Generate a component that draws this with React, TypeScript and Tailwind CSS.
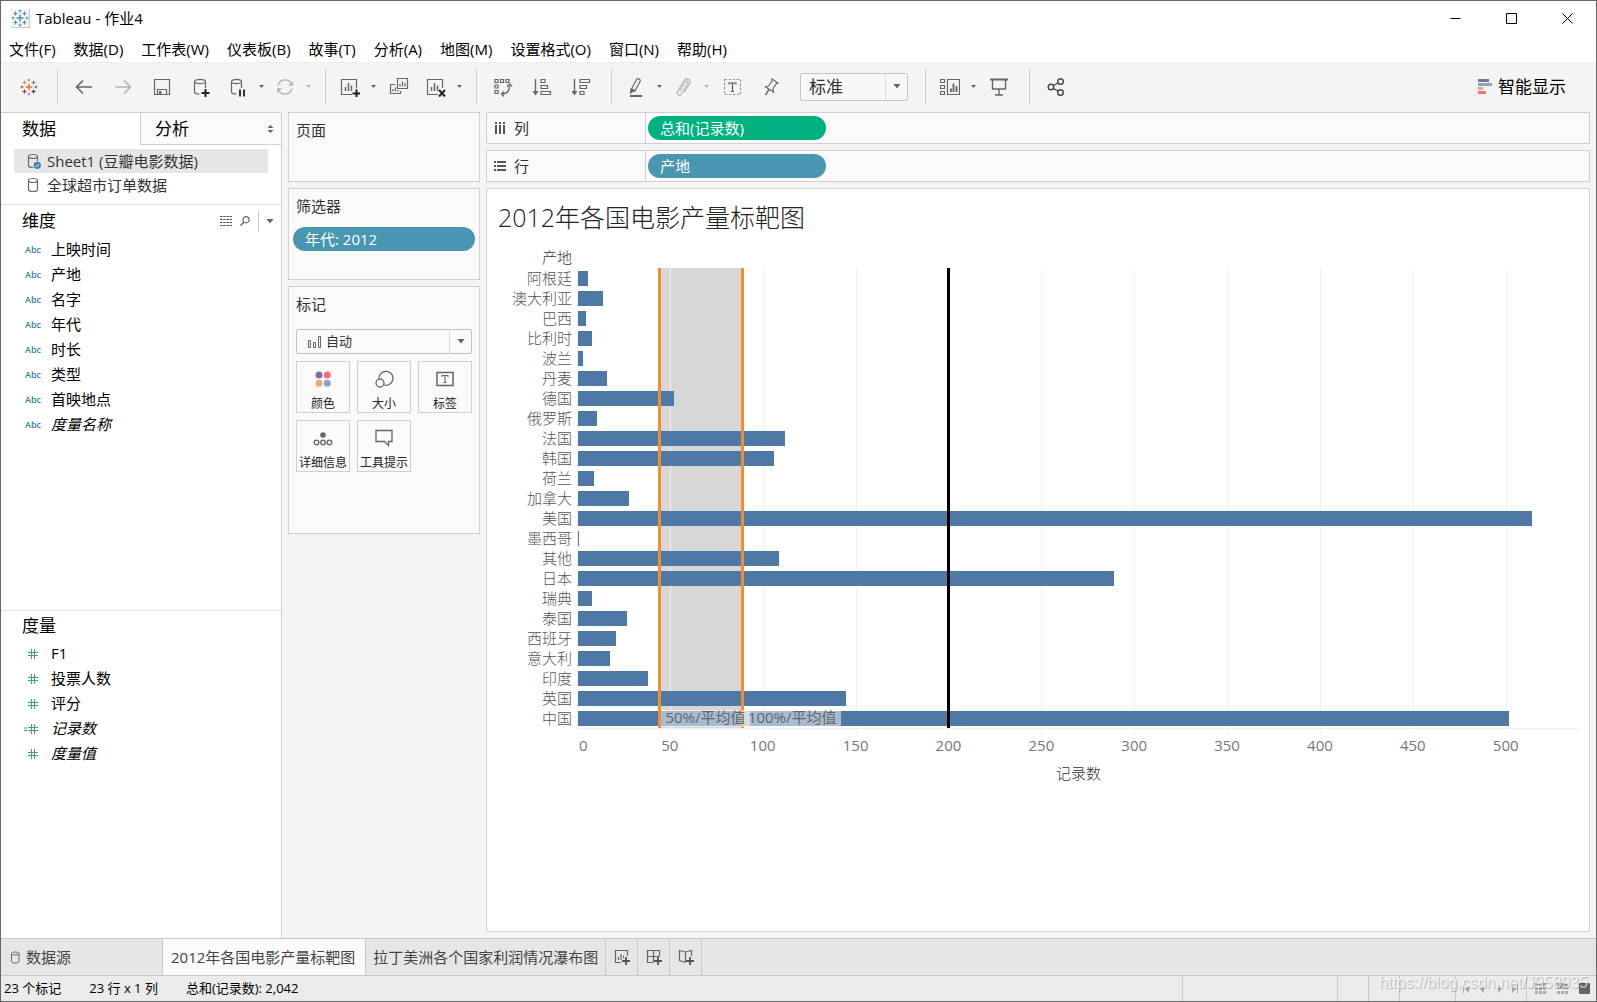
import React, { useState } from 'react';

interface Country {
    name: string;
    count: number;
}

const COUNTRIES: Country[] = [
    { name: '阿根廷', count: 6 },
    { name: '澳大利亚', count: 14 },
    { name: '巴西', count: 5 },
    { name: '比利时', count: 8 },
    { name: '波兰', count: 3 },
    { name: '丹麦', count: 16 },
    { name: '德国', count: 52 },
    { name: '俄罗斯', count: 11 },
    { name: '法国', count: 112 },
    { name: '韩国', count: 106 },
    { name: '荷兰', count: 9 },
    { name: '加拿大', count: 28 },
    { name: '美国', count: 514 },
    { name: '墨西哥', count: 1 },
    { name: '其他', count: 109 },
    { name: '日本', count: 289 },
    { name: '瑞典', count: 8 },
    { name: '泰国', count: 27 },
    { name: '西班牙', count: 21 },
    { name: '意大利', count: 18 },
    { name: '印度', count: 38 },
    { name: '英国', count: 145 },
    { name: '中国', count: 502 }
];

const AXIS_MAX = 540;
const TICKS = [0, 50, 100, 150, 200, 250, 300, 350, 400, 450, 500];
const TOTAL = COUNTRIES.reduce((sum, c) => sum + c.count, 0);
const AVERAGE = TOTAL / COUNTRIES.length;
const TARGET = 200;

const pct = (value: number) => `${(value / AXIS_MAX) * 100}%`;

const MENUS = ['文件(F)', '数据(D)', '工作表(W)', '仪表板(B)', '故事(T)', '分析(A)', '地图(M)', '设置格式(O)', '窗口(N)', '帮助(H)'];

const DIMENSIONS = ['上映时间', '产地', '名字', '年代', '时长', '类型', '首映地点', '度量名称'];
const MEASURES = ['F1', '投票人数', '评分', '记录数', '度量值'];

/* ---------- icons ---------- */

interface IconProps {
    size?: number;
    children: React.ReactNode;
    className?: string;
}

const Icon: React.FC<IconProps> = ({ size = 20, children, className = '' }) => (
    <svg
        width={size}
        height={size}
        viewBox={`0 0 ${size} ${size}`}
        fill="none"
        stroke="#666"
        strokeWidth="1.2"
        className={`shrink-0 ${className}`}
        aria-hidden="true"
    >
        {children}
    </svg>
);

const TableauLogo: React.FC<{ mono?: boolean }> = ({ mono }) => {
    const c = (color: string) => (mono ? '#4a90b8' : color);
    return (
        <Icon size={18}>
            <path d="M9 5.5v7M5.5 9h7" stroke={c('#e8762c')} strokeWidth="1.5" />
            <path d="M4.5 2.5v4M2.5 4.5h4" stroke={c('#eb912c')} strokeWidth="1.2" />
            <path d="M13.5 2.5v4M11.5 4.5h4" stroke={c('#59879b')} strokeWidth="1.2" />
            <path d="M4.5 11.5v4M2.5 13.5h4" stroke={c('#c72035')} strokeWidth="1.2" />
            <path d="M13.5 11.5v4M11.5 13.5h4" stroke={c('#1f447e')} strokeWidth="1.2" />
            <path d="M9 0.5v3M7.5 2h3M9 14.5v3M7.5 16h3" stroke={c('#7199a6')} strokeWidth="1" />
            <path d="M2 7.5v3M0.5 9h3M16 7.5v3M14.5 9h3" stroke={c('#5b6591')} strokeWidth="1" />
        </Icon>
    );
};

const Cylinder: React.FC = () => (
    <Icon size={16}>
        <path d="M3.5 3.5v9c0 1 2 2 4.5 2s4.5-1 4.5-2v-9" />
        <ellipse cx="8" cy="3.5" rx="4.5" ry="2" />
    </Icon>
);

const CylinderChecked: React.FC = () => (
    <Icon size={16}>
        <path d="M3.5 3.5v9c0 1 2 2 4.5 2M12.5 8v-4.5" />
        <ellipse cx="8" cy="3.5" rx="4.5" ry="2" />
        <circle cx="12.3" cy="12.3" r="3.6" fill="#3a85a8" stroke="none" />
        <path d="M10.6 12.4l1.2 1.2 2.2-2.5" stroke="#fff" strokeWidth="1" />
    </Icon>
);

const Caret: React.FC = () => (
    <svg width="8" height="5" viewBox="0 0 8 5" className="shrink-0 fill-[#666]" aria-hidden="true">
        <path d="M0.5 0h7L4 4.5z" />
    </svg>
);

const SmallCaret: React.FC<{ muted?: boolean }> = ({ muted }) => (
    <svg width="5" height="3" viewBox="0 0 5 3" className={muted ? 'fill-[#b4b4b4]' : 'fill-[#666]'} aria-hidden="true">
        <path d="M0 0h5L2.5 3z" />
    </svg>
);

const BackIcon = () => (
    <Icon><path d="M18 10H3M9 3.5L2.5 10L9 16.5" strokeWidth="1.6" /></Icon>
);

const ForwardIcon = () => (
    <Icon><path d="M2 10h15M11 3.5l6.5 6.5l-6.5 6.5" stroke="#b4b4b4" strokeWidth="1.6" /></Icon>
);

const SaveIcon = () => (
    <Icon>
        <path d="M2.5 2.5h15v15h-15z" />
        <path d="M5.5 17.5v-5h9v5" />
        <path d="M7 14h2.5v3.5H7z" fill="#666" stroke="none" />
    </Icon>
);

const DbPlusIcon = () => (
    <Icon>
        <path d="M3.5 5v10c0 1 1.8 2 5 2M14.5 11V5" />
        <ellipse cx="9" cy="4.5" rx="5.5" ry="2.2" />
        <path d="M14.5 12v8M10.5 16h8" stroke="#222" strokeWidth="2" />
    </Icon>
);

const DbPauseIcon = () => (
    <Icon>
        <path d="M3.5 5v10c0 1 1.8 2 5 2M13.5 11V5" />
        <ellipse cx="8.5" cy="4.5" rx="5" ry="2.2" />
        <path d="M12 12.5v7M16 12.5v7" stroke="#333" strokeWidth="2" />
    </Icon>
);

const RefreshIcon = () => (
    <Icon>
        <path d="M3 8.5a7.2 7.2 0 0 1 13.5-1.500M17 11.5a7.2 7.2 0 0 1-13.5 1.500" stroke="#b4b4b4" strokeWidth="1.4" />
        <path d="M18 4v4.8h-4.800zM2 16v-4.800h4.800z" fill="#b4b4b4" stroke="none" />
    </Icon>
);

const NewSheetIcon = () => (
    <Icon>
        <path d="M12 17.5H1.5v-15h15v9" />
        <path d="M5.5 14V10M8.5 14V6M11.5 14V8.5" strokeWidth="1.5" />
        <path d="M16.5 12.5v8M12.5 16.5h8" stroke="#222" strokeWidth="2" />
    </Icon>
);

const DuplicateIcon = () => (
    <Icon>
        <path d="M8.5 1.5h10v10h-10z" />
        <path d="M6 7.5H1.5v9h10V14" />
        <path d="M11 9.5V7M13.5 9.5V4.5M16 9.5V6M4 14.5V12M6.5 14.5V10.5M9 14.5V13" />
    </Icon>
);

const ClearIcon = () => (
    <Icon>
        <path d="M12 17.5H1.5v-15h15v8.5" />
        <path d="M5.5 14V10M8.5 14V6M11.5 14V8.5" strokeWidth="1.5" />
        <path d="M13 13l6 6.5M19 13l-6 6.5" stroke="#222" strokeWidth="2" />
    </Icon>
);

const SwapIcon = () => (
    <Icon>
        <path d="M2 2.5h3v3H2zM7.5 2.5h3v3h-3zM13 2.5h3v3h-3zM2 8h3v3H2zM2 13.5h3v3H2z" />
        <path d="M16.5 9c0 5-2.5 7.5-7 8" strokeWidth="1.4" />
        <path d="M14 9.5L16.5 7L19 9.5M11 14.5L8.5 17l2.5 2.5" strokeWidth="1.4" />
    </Icon>
);

const SortAscIcon = () => (
    <Icon>
        <path d="M3.5 2v14" strokeWidth="1.4" />
        <path d="M0.5 14h6l-3 4.5z" fill="#666" stroke="none" />
        <path d="M9 2.5h4v3H9zM9 8.5h6.5v3H9zM9 14.5h9.5v3H9z" />
    </Icon>
);

const SortDescIcon = () => (
    <Icon>
        <path d="M3.5 2v14" strokeWidth="1.4" />
        <path d="M0.5 14h6l-3 4.5z" fill="#666" stroke="none" />
        <path d="M9 2.5h9.5v3H9zM9 8.5h6.5v3H9zM9 14.5h4v3H9z" />
    </Icon>
);

const PenIcon = () => (
    <Icon>
        <path d="M5.5 12L10.5 2.500q1-1.500 2.700-.500t.800 2.500L9 14z" />
        <path d="M5 11.500l4.500 2.500" />
        <path d="M4.500 16l.500-3.500 2.500 1.500z" fill="#666" />
        <path d="M4 19h12" strokeWidth="2" />
    </Icon>
);

const ClipIcon = () => (
    <Icon>
        <path
            d="M6.5 14.500L12 5c1-2 3.500-.500 2.500 1.500l-6 10.500c-1.500 2.500-5.500.500-4-2.500l6.500-11c2-3.500 7.500-.500 5.500 3L11.500 15"
            stroke="#b4b4b4"
        />
    </Icon>
);

const TextIcon = () => (
    <Icon>
        <path d="M2.5 2.5h16v15h-16z" stroke="#999" strokeDasharray="2.5 1.5" />
        <path d="M7 7.5V6h7v1.5M10.5 6v8.500M9 14.500h3" stroke="#555" strokeWidth="1.200" />
    </Icon>
);

const PinIcon = () => (
    <Icon>
        <path d="M11 2l6 4-1.500.500-3.500 5 .500 3.500-8-5 3-1 3.500-5z" />
        <path d="M8 12.500L4.500 18" strokeWidth="1.400" />
    </Icon>
);

const ShowCardsIcon = () => (
    <Icon>
        <path d="M0.5 2.5h4v3h-4zM0.5 8.5h4v3h-4zM0.5 14.5h4v3h-4zM7.5 2.5h12v15h-12z" />
        <path d="M11 15v-3.5M13.5 15V6.5M16.5 15v-6" strokeWidth="1.8" />
    </Icon>
);

const PresentIcon = () => (
    <Icon>
        <path d="M1 2.5h18" strokeWidth="2" />
        <path d="M3.5 3v9h13V3M10 12v6M6 18h8" strokeWidth="1.4" />
    </Icon>
);

const ShareIcon = () => (
    <Icon>
        <g strokeWidth="1.4" stroke="#444">
            <circle cx="5" cy="10" r="2.8" />
            <circle cx="14.5" cy="4.5" r="2.8" />
            <circle cx="14.5" cy="15.5" r="2.8" />
            <path d="M7.5 8.5l4.5-2.5M7.5 11.5l4.5 2.5" />
        </g>
    </Icon>
);

const HashIcon: React.FC<{ calculated?: boolean }> = ({ calculated }) => (
    <svg width="16" height="12" viewBox="0 0 16 12" fill="none" stroke="#3f9f7f" aria-hidden="true">
        <path d="M8.5 1v10M11.5 1v10M5 4.5h10M5 7.5h10" strokeWidth="1.1" />
        {calculated && <path d="M1 5h3M1 7.5h3" strokeWidth="1" />}
    </svg>
);

/* ---------- title bar, menu and toolbar ---------- */

const TitleBar: React.FC = () => (
    <div className="flex h-[34px] items-center justify-between bg-white pr-px pl-[10px]">
        <div className="flex items-center gap-1.5">
            <span className="border-r border-b border-[#c8c8c8] bg-[#f4f4f4]"><TableauLogo mono /></span>
            <span className="text-[15px] text-black">Tableau - 作业4</span>
        </div>
        <div className="flex">
            <button aria-label="最小化" className="flex h-8 w-14 items-center justify-center">
                <Icon size={11}><path d="M0.5 5.5h10" stroke="#000" strokeWidth="1" /></Icon>
            </button>
            <button aria-label="最大化" className="flex h-8 w-14 items-center justify-center">
                <Icon size={11}><path d="M0.5 0.5h10v10h-10z" stroke="#000" strokeWidth="1" /></Icon>
            </button>
            <button aria-label="关闭" className="flex h-8 w-14 items-center justify-center">
                <Icon size={11}><path d="M0.5 0.5l10 10M10.5 0.5l-10 10" stroke="#000" strokeWidth="1" /></Icon>
            </button>
        </div>
    </div>
);

const MenuBar: React.FC = () => (
    <nav className="flex h-[27px] items-center gap-[18px] bg-white pt-0.5 pl-2 text-[15px] text-black">
        {MENUS.map(menu => (
            <button key={menu} className="whitespace-nowrap">{menu}</button>
        ))}
    </nav>
);

interface ToolProps {
    label: string;
    children: React.ReactNode;
    menu?: boolean;
    muted?: boolean;
}

const Tool: React.FC<ToolProps> = ({ label, children, menu, muted }) => (
    <>
        <button aria-label={label} className={`flex h-9 items-center justify-center ${menu ? 'w-[35px]' : 'w-[39px]'}`}>
            {children}
        </button>
        {menu && (
            <button aria-label={`${label}选项`} className="flex h-9 w-3 items-center justify-center">
                <SmallCaret muted={muted} />
            </button>
        )}
    </>
);

const Divider = () => <span className="mr-1.5 ml-[11px] h-[35px] w-px bg-[#cfcfcf]" />;

const Toolbar: React.FC = () => {
    const [fit, setFit] = useState('标准');

    return (
        <div className="flex h-[50px] items-center border-t border-[#ededed] bg-[#f4f4f4] pb-0.5">
            <div className="flex w-[45px] justify-center pl-[11px]">
                <TableauLogo />
            </div>
            <Divider />
            <Tool label="撤消"><BackIcon /></Tool>
            <Tool label="恢复"><ForwardIcon /></Tool>
            <Tool label="保存"><SaveIcon /></Tool>
            <Tool label="新建数据源"><DbPlusIcon /></Tool>
            <Tool label="暂停自动更新" menu><DbPauseIcon /></Tool>
            <Tool label="运行更新" menu muted><RefreshIcon /></Tool>
            <Divider />
            <Tool label="新建工作表" menu><NewSheetIcon /></Tool>
            <Tool label="复制"><DuplicateIcon /></Tool>
            <Tool label="清除工作表" menu><ClearIcon /></Tool>
            <Divider />
            <Tool label="交换行和列"><SwapIcon /></Tool>
            <Tool label="升序排序"><SortAscIcon /></Tool>
            <Tool label="降序排序"><SortDescIcon /></Tool>
            <Divider />
            <Tool label="突出显示" menu><PenIcon /></Tool>
            <Tool label="组成员" menu muted><ClipIcon /></Tool>
            <Tool label="显示标记标签"><TextIcon /></Tool>
            <Tool label="固定轴"><PinIcon /></Tool>
            <div className="mr-1.5 ml-2.5 flex h-7 w-[108px] items-center rounded-xs border border-[#c4c4c4] bg-[#f7f7f7]">
                <select
                    aria-label="适合"
                    value={fit}
                    onChange={e => setFit(e.target.value)}
                    className="h-full min-w-0 flex-1 appearance-none pl-2 text-[17px] text-[#333] outline-none"
                >
                    <option>标准</option>
                    <option>整个视图</option>
                </select>
                <span className="pointer-events-none flex h-full w-[22px] items-center justify-center border-l border-[#dcdcdc]">
                    <Caret />
                </span>
            </div>
            <Divider />
            <Tool label="显示/隐藏卡" menu><ShowCardsIcon /></Tool>
            <Tool label="演示模式"><PresentIcon /></Tool>
            <Divider />
            <Tool label="共享"><ShareIcon /></Tool>
            <button className="mr-[30px] ml-auto flex items-center gap-1.5 text-[17px] text-black">
                <svg width="14" height="16" viewBox="0 0 14 16" aria-hidden="true">
                    <path d="M0 0h11v3H0z" fill="#856f9b" />
                    <path d="M0 4h14v3H0z" fill="#85a7cf" />
                    <path d="M0 8h5v3H0z" fill="#f5a57c" />
                    <path d="M0 12h8v3H0z" fill="#f96f80" />
                </svg>
                智能显示
            </button>
        </div>
    );
};

/* ---------- data pane ---------- */

const DataPane: React.FC = () => (
    <aside className="flex w-[281px] shrink-0 flex-col border-t border-r border-[#d0d0d0] bg-white text-[15px] text-black">
        <div className="flex h-8 text-[17px]">
            <button className="w-[139px] pl-[21px] text-left">数据</button>
            <button className="flex flex-1 items-center justify-between border-b border-l border-[#d0d0d0] bg-[#fafafa] pr-[7px] pl-3.5">
                分析
                <svg width="7" height="8" viewBox="0 0 7 8" className="fill-[#56657a]" aria-hidden="true">
                    <path d="M0.5 3L3.5 0l3 3zM0.5 5h6l-3 3z" />
                </svg>
            </button>
        </div>
        <ul className="flex h-[59px] flex-col pt-1 pr-[13px] pl-[13px] text-[#333]">
            <li className="flex h-6 items-center gap-1.5 bg-[#e6e6e6] pl-[11px]">
                <CylinderChecked />
                Sheet1 (豆瓣电影数据)
            </li>
            <li className="flex h-6 items-center gap-1.5 pl-[11px]">
                <Cylinder />
                全球超市订单数据
            </li>
        </ul>
        <section className="flex-1 border-t border-[#e0e0e0]">
            <div className="flex h-8 items-center pr-[7px] pl-[21px]">
                <h2 className="flex-1 text-[17px]">维度</h2>
                <button aria-label="查看数据">
                    <svg width="12" height="10" viewBox="0 0 12 10" stroke="#555" aria-hidden="true">
                        <path d="M0 0.5h12M0 3.5h12M0 6.5h12M0 9.5h12" strokeWidth="1" strokeDasharray="2.5 .7" />
                    </svg>
                </button>
                <button aria-label="查找字段" className="ml-2">
                    <Icon size={10}>
                        <circle cx="6" cy="3.7" r="3.1" />
                        <path d="M4 6L0.5 9.5" strokeWidth="1.5" />
                    </Icon>
                </button>
                <span className="mr-[7px] ml-2 h-[22px] w-px bg-[#cfcfcf]" />
                <button aria-label="维度选项"><Caret /></button>
            </div>
            <ul>
                {DIMENSIONS.map(field => (
                    <li key={field} className="flex h-[25px] items-center pl-6">
                        <span className="w-[26px] text-[9px] font-semibold text-[#3a7f9c]">Abc</span>
                        <span className={field === '度量名称' ? 'italic' : ''}>{field}</span>
                    </li>
                ))}
            </ul>
        </section>
        <section className="h-82 border-t border-[#e0e0e0]">
            <h2 className="flex h-[30px] items-center pl-[21px] text-[17px]">度量</h2>
            <ul>
                {MEASURES.map(field => (
                    <li key={field} className="flex h-[25px] items-center pl-[22px]">
                        <span className="w-[28px]"><HashIcon calculated={field === '记录数'} /></span>
                        <span className={field === '记录数' || field === '度量值' ? 'italic' : ''}>{field}</span>
                    </li>
                ))}
            </ul>
        </section>
    </aside>
);

/* ---------- cards ---------- */

interface CardProps {
    title: string;
    className: string;
    children?: React.ReactNode;
}

const Card: React.FC<CardProps> = ({ title, className, children }) => (
    <section className={`border border-[#d0d0d0] bg-[#fafafa] ${className}`}>
        <h2 className="flex h-[34px] items-center px-[7px] text-[15px] text-[#333]">{title}</h2>
        {children}
    </section>
);

const MarkTile: React.FC<{ label: string; children: React.ReactNode }> = ({ label, children }) => (
    <button className="flex h-[52px] flex-col items-center justify-between border border-[#d0d0d0] pt-2 text-xs whitespace-nowrap text-[#222]">
        <svg width="20" height="18" viewBox="0 0 20 18" fill="none" stroke="#666" strokeWidth="1.3" aria-hidden="true">
            {children}
        </svg>
        <span className="leading-4">{label}</span>
    </button>
);

const Cards: React.FC = () => {
    const [mark, setMark] = useState('自动');

    return (
        <div className="flex w-[192px] shrink-0 flex-col gap-1.5">
            <Card title="页面" className="h-[70px]" />
            <Card title="筛选器" className="h-[92px]">
                <button className="mx-1 mt-1 flex h-6 w-[182px] items-center rounded-full bg-[#4996b2] pl-3 text-[15px] text-white">
                    年代: 2012
                </button>
            </Card>
            <Card title="标记" className="h-[248px]">
                <div className="mx-[7px] mt-2 mb-[7px] flex h-[25px] items-center rounded-xs border border-[#c4c4c4] pl-[11px]">
                    <svg width="14" height="14" viewBox="0 0 14 14" fill="none" stroke="#666" aria-hidden="true">
                        <path d="M0.5 5.5h2v7h-2zM5.5 7.5h2v5h-2zM10.5 1.5h2v11h-2z" />
                    </svg>
                    <select
                        aria-label="标记类型"
                        value={mark}
                        onChange={e => setMark(e.target.value)}
                        className="h-full min-w-0 flex-1 appearance-none pl-1 text-[13px] text-[#333] outline-none"
                    >
                        <option>自动</option>
                        <option>条形图</option>
                        <option>线</option>
                    </select>
                    <span className="pointer-events-none flex h-full w-[22px] items-center justify-center border-l border-[#dcdcdc]">
                        <Caret />
                    </span>
                </div>
                <div className="mx-[7px] grid grid-cols-3 gap-[7px]">
                    <MarkTile label="颜色">
                        <g stroke="none">
                            <circle cx="6" cy="5" r="3.5" fill="#856f9b" />
                            <circle cx="14.3" cy="5" r="3.5" fill="#f96f80" />
                            <circle cx="6" cy="13.3" r="3.5" fill="#f5a57c" />
                            <circle cx="14.3" cy="13.3" r="3.5" fill="#85a7cf" />
                        </g>
                    </MarkTile>
                    <MarkTile label="大小">
                        <path d="M5 8a7 7 0 1 1 5 7" />
                        <circle cx="6" cy="13" r="4" />
                    </MarkTile>
                    <MarkTile label="标签">
                        <path d="M2 2.5h16v13H2z" strokeWidth="1.5" />
                        <path d="M7 7V5.5h6V7M10 5.5v7M8.5 12.5h3" strokeWidth="1.1" />
                    </MarkTile>
                    <MarkTile label="详细信息">
                        <circle cx="10" cy="6" r="2.8" fill="#666" stroke="none" />
                        <circle cx="3.5" cy="13.5" r="2.3" />
                        <circle cx="10" cy="13.5" r="2.3" />
                        <circle cx="16.5" cy="13.5" r="2.3" />
                    </MarkTile>
                    <MarkTile label="工具提示">
                        <path d="M2 1.5h16v11h-3.5v4l-4-4H2z" />
                    </MarkTile>
                </div>
            </Card>
        </div>
    );
};

/* ---------- shelves and view ---------- */

interface ShelfProps {
    label: string;
    icon: React.ReactNode;
    children: React.ReactNode;
}

const Shelf: React.FC<ShelfProps> = ({ label, icon, children }) => (
    <div className="flex h-8 border border-[#d0d0d0] bg-[#fafafa]">
        <div className="flex w-[159px] items-center gap-2 border-r border-[#d0d0d0] pl-[7px] text-[15px] text-[#333]">
            {icon}
            {label}
        </div>
        <div className="flex flex-1 items-center pl-0.5">{children}</div>
    </div>
);

const BandLabel: React.FC<{ at: number; children: React.ReactNode }> = ({ at, children }) => (
    <span
        className="absolute bottom-px ml-0.5 h-[17px] bg-white/50 px-1 text-[15px] leading-[14px] font-normal whitespace-nowrap text-[#666]"
        style={{ left: pct(at) }}
    >
        {children}
    </span>
);

const BarChart: React.FC = () => (
    <div className="flex pr-[9px] pl-3 font-light">
        <div className="w-[78px] shrink-0 pr-[5px] text-right text-[15px] text-[#555]">
            <div className="h-5 leading-[18px] text-[#333]">产地</div>
            {COUNTRIES.map(c => (
                <div key={c.name} className="h-5 leading-5 whitespace-nowrap">{c.name}</div>
            ))}
        </div>
        <div className="flex-1 pt-5">
            <div className="relative border-b border-[#f0f0f0]">
                {/* shaded band between half of the average and the average */}
                <div
                    className="absolute inset-y-0 bg-[#d7d7d7]"
                    style={{ left: pct(AVERAGE / 2), width: pct(AVERAGE / 2) }}
                />
                {TICKS.map(t => (
                    <div key={t} className="absolute top-0 -bottom-1.5 w-px bg-[#f0f0f0]" style={{ left: pct(t) }} />
                ))}
                {COUNTRIES.map(c => (
                    <div key={c.name} className="relative h-5 pt-[3px]">
                        <div className="h-[15px] border-l border-[#f0f0f0] bg-[#4e79a7]" style={{ width: pct(c.count) }} />
                    </div>
                ))}
                <div className="absolute inset-y-0 -ml-px w-[3px] bg-[#f28e2b]" style={{ left: pct(AVERAGE / 2) }} />
                <div className="absolute inset-y-0 -ml-px w-[3px] bg-[#f28e2b]" style={{ left: pct(AVERAGE) }} />
                <div className="absolute inset-y-0 -ml-px w-[3px] bg-black" style={{ left: pct(TARGET) }} />
                <BandLabel at={AVERAGE / 2}>50%/平均值</BandLabel>
                <BandLabel at={AVERAGE}>100%/平均值</BandLabel>
            </div>
            <div className="relative h-8 text-[15px] font-normal text-[#777]">
                {TICKS.map(t => (
                    <span
                        key={t}
                        className={`absolute top-1 leading-6 ${t === 0 ? 'pl-0.5' : '-translate-x-1/2'}`}
                        style={{ left: pct(t) }}
                    >
                        {t}
                    </span>
                ))}
            </div>
            <div className="text-center text-[15px] leading-6 text-[#333]">记录数</div>
        </div>
    </div>
);

const View: React.FC = () => (
    <main className="flex min-w-0 flex-1 flex-col gap-1.5">
        <Shelf
            label="列"
            icon={
                <svg width="12" height="12" viewBox="0 0 12 12" stroke="#555" strokeWidth="2" aria-hidden="true">
                    <path d="M2 0v2M6 0v2M10 0v2M2 3v9M6 3v9M10 3v9" />
                </svg>
            }
        >
            <button className="flex h-6 w-[178px] items-center rounded-full bg-[#00b180] pl-3 text-[15px] text-white">
                总和(记录数)
            </button>
        </Shelf>
        <Shelf
            label="行"
            icon={
                <svg width="12" height="12" viewBox="0 0 12 12" stroke="#555" strokeWidth="2" aria-hidden="true">
                    <path d="M0 2h2M0 6h2M0 10h2M3 2h9M3 6h9M3 10h9" />
                </svg>
            }
        >
            <button className="flex h-6 w-[178px] items-center rounded-full bg-[#4996b2] pl-3 text-[15px] text-white">
                产地
            </button>
        </Shelf>
        <section className="flex-1 border border-[#d0d0d0] bg-white">
            <h1 className="flex h-[59px] items-center pb-0.5 pl-[11px] text-[25px] font-light text-[#222]">
                2012年各国电影产量标靶图
            </h1>
            <BarChart />
        </section>
    </main>
);

/* ---------- sheet tabs and status bar ---------- */

const NewTabButton: React.FC<{ label: string; children: React.ReactNode }> = ({ label, children }) => (
    <button aria-label={label} className="flex w-8 items-center justify-center border-r border-[#c8c8c8]">
        <Icon size={16}>
            {children}
            <path d="M12 8v8M8 12h8" stroke="#555" strokeWidth="1.8" />
        </Icon>
    </button>
);

const SheetTabs: React.FC = () => (
    <div className="flex h-[37px] border-t border-[#c8c8c8] bg-[#e6e6e6] text-[15px] text-[#444]">
        <button className="flex w-[162px] items-center gap-1.5 border-r border-[#c8c8c8] pl-2.5">
            <svg width="9" height="13" viewBox="0 0 9 13" fill="none" stroke="#666" aria-hidden="true">
                <path d="M0.5 2.5v8c0 2 7.5 2 7.5 0v-8" />
                <ellipse cx="4.25" cy="2.5" rx="3.75" ry="1.5" />
            </svg>
            数据源
        </button>
        <button className="border-r border-[#c8c8c8] bg-[#fafafa] pr-2.5 pl-2 whitespace-nowrap">2012年各国电影产量标靶图</button>
        <button className="border-r border-[#c8c8c8] px-[7px] whitespace-nowrap">拉丁美洲各个国家利润情况瀑布图</button>
        <NewTabButton label="新建工作表标签">
            <path d="M7 13.5H1.5v-12h12V7" />
            <path d="M4.5 11V8M7 11V5M9.5 9V6.5" />
        </NewTabButton>
        <NewTabButton label="新建仪表板">
            <path d="M7 13.5H1.5v-12h12V7M7.5 1.5v12M1.5 7.5h12" />
        </NewTabButton>
        <NewTabButton label="新建故事">
            <path d="M7.500 13.500l-6-2v-10l6 1.500 6-1.500V7M7.500 3v10" />
        </NewTabButton>
    </div>
);

const StatusBar: React.FC = () => (
    <footer className="relative flex h-[26px] items-stretch border-t border-[#c8c8c8] bg-[#ebebeb] pl-[3px] text-[13px] text-black">
        <div className="flex items-center gap-7">
            <span>{COUNTRIES.length} 个标记</span>
            <span>{COUNTRIES.length} 行 x 1 列</span>
            <span>总和(记录数): {TOTAL.toLocaleString('en-US')}</span>
        </div>
        <div className="ml-auto flex">
            <span className="w-[155px] border-l border-[#c8c8c8]" />
            <span className="w-[31px] border-l border-[#c8c8c8]" />
            <span className="w-[31px] border-l border-[#c8c8c8]" />
            <span className="w-[56px] border-l border-[#c8c8c8]" />
            <span className="flex w-[71px] items-center justify-center border-l border-[#c8c8c8]">
                <svg width="56" height="8" viewBox="0 0 56 8" className="fill-[#aaa]" aria-hidden="true">
                    <path d="M0 0h1v8H0zM6 0v8L2 4zM21 0v8l-4-4zM35 0v8l4-4zM49 0v8l4-4zM54 0h1v8h-1z" />
                </svg>
            </span>
            <span className="flex w-[70px] items-center gap-[11px] border-l border-[#c8c8c8] pl-2">
                <svg width="11" height="11" viewBox="0 0 11 11" className="fill-[#aaa]" aria-hidden="true">
                    <path d="M0 0h3v3H0zM4 0h3v3H4zM8 0h3v3H8zM0 4h3v3H0zM4 4h3v3H4zM8 4h3v3H8zM0 8h3v3H0zM4 8h3v3H4zM8 8h3v3H8z" />
                </svg>
                <svg width="11" height="11" viewBox="0 0 11 11" className="fill-[#aaa]" aria-hidden="true">
                    <path d="M0 0h11v6H0zM0 8h3v3H0zM4 8h3v3H4zM8 8h3v3H8z" />
                </svg>
                <span className="h-[11px] w-[11px] rounded-[1px] bg-[#666]" />
            </span>
        </div>
        <span className="pointer-events-none absolute right-2 bottom-1.5 font-['Liberation_Sans'] text-base text-white/70 [text-shadow:1px_1px_1px_rgba(0,0,0,0.25)]">
            https://blog.csdn.net/J958935
        </span>
    </footer>
);

const App: React.FC = () => (
    <div className="flex min-h-screen flex-col border border-[#666] bg-[#f4f4f4] font-['Open_Sans','Noto_Sans_CJK_SC',sans-serif]">
        <TitleBar />
        <MenuBar />
        <Toolbar />
        <div className="flex flex-1 gap-1.5 pr-1.5">
            <DataPane />
            <Cards />
            <div className="flex min-w-0 flex-1 pb-1.5">
                <View />
            </div>
        </div>
        <SheetTabs />
        <StatusBar />
    </div>
);

export default App;
